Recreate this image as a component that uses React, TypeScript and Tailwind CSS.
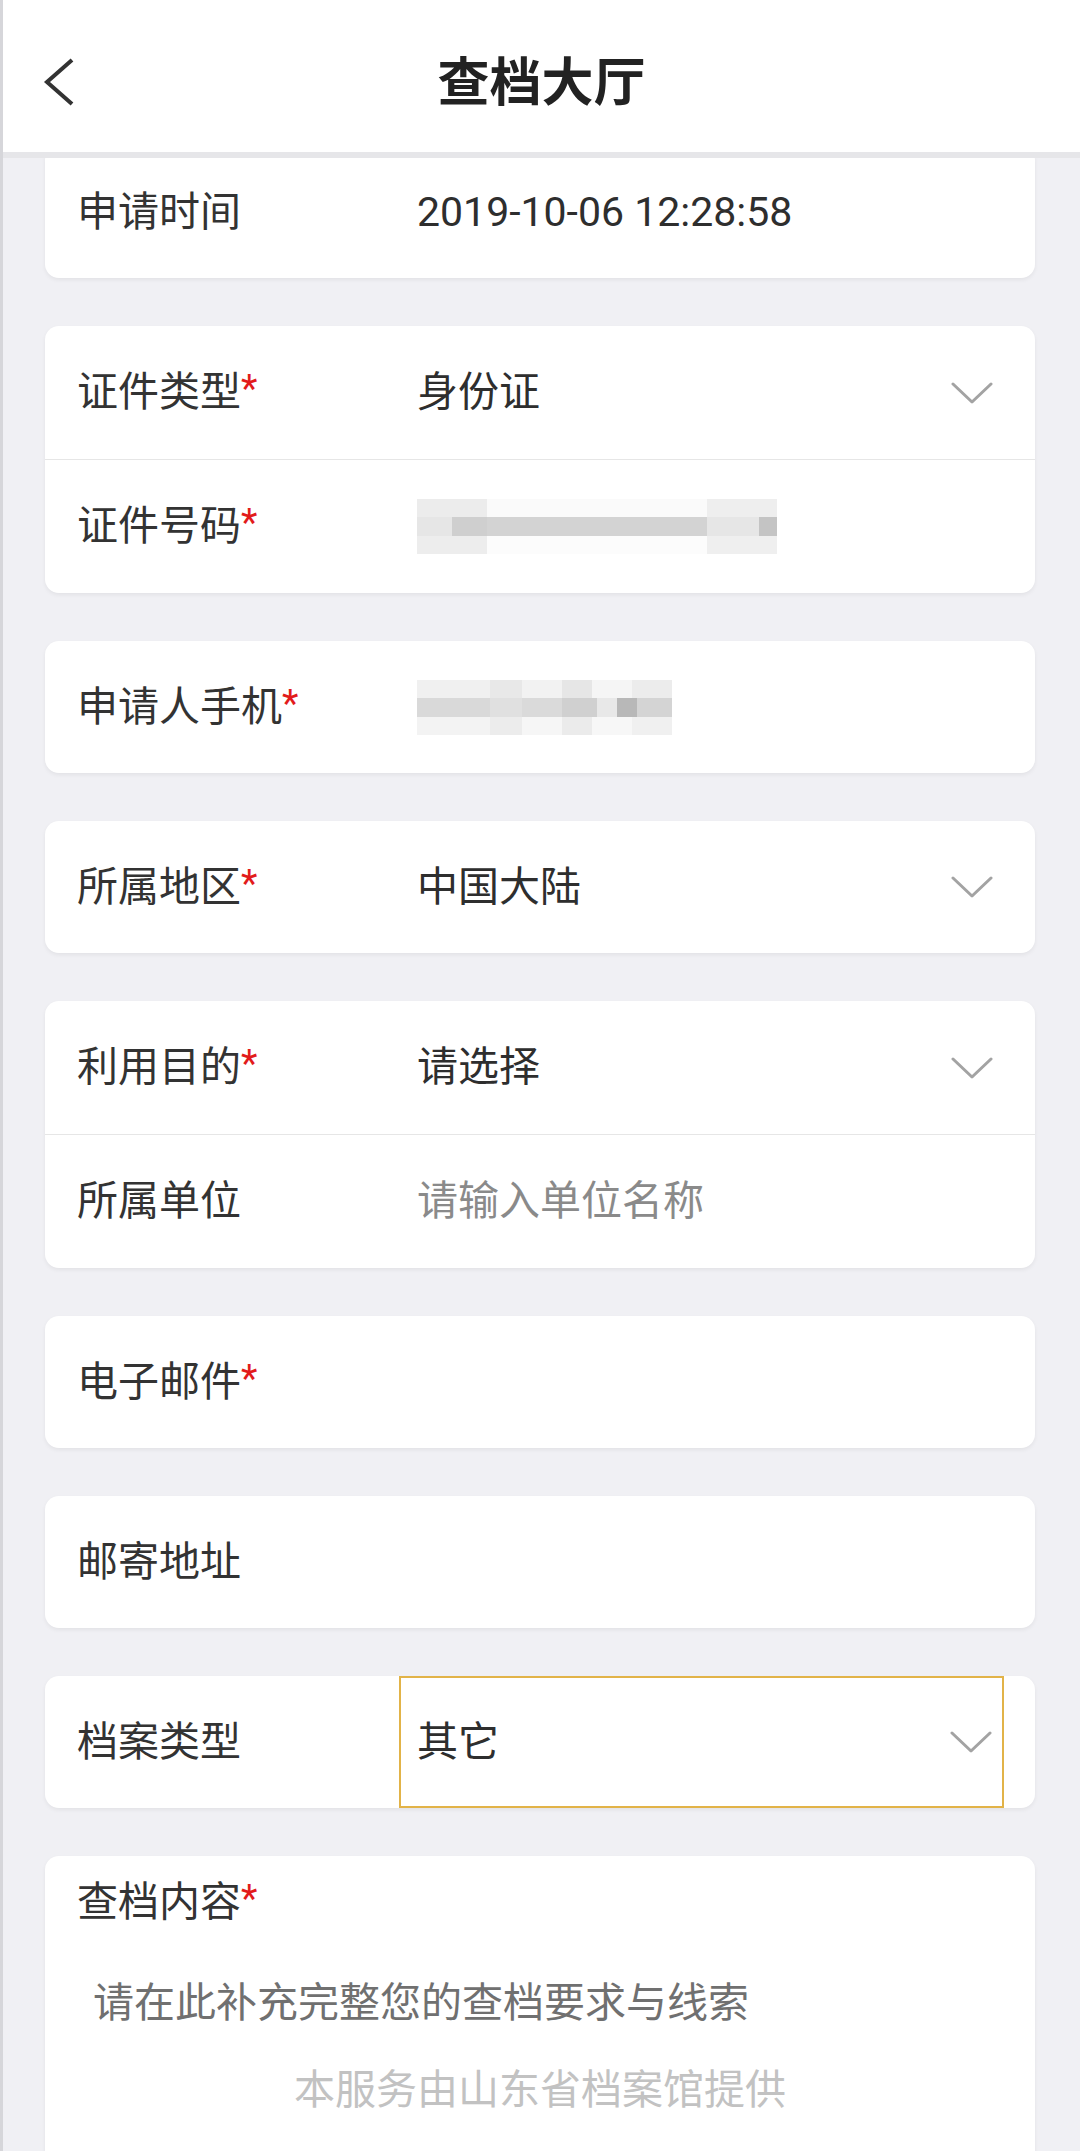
import React from 'react';

type Seg = { w: string; c: string };

// pixelated mosaic that hides the ID number / phone in the screenshot
const ID_BLUR: Seg[][] = [
  [{ w: 'w-[70px]', c: 'bg-[#ececec]' }, { w: 'w-[220px]', c: 'bg-[#fafafa]' }, { w: 'w-[70px]', c: 'bg-[#eeeeee]' }],
  [{ w: 'w-[35px]', c: 'bg-[#e6e6e6]' }, { w: 'w-[35px]', c: 'bg-[#cfcfcf]' }, { w: 'w-[220px]', c: 'bg-[#d3d3d3]' }, { w: 'w-[52px]', c: 'bg-[#e6e6e6]' }, { w: 'w-[18px]', c: 'bg-[#c4c4c4]' }],
  [{ w: 'w-[70px]', c: 'bg-[#ededed]' }, { w: 'w-[220px]', c: 'bg-[#fcfcfc]' }, { w: 'w-[70px]', c: 'bg-[#efefef]' }],
];

const PHONE_BLUR: Seg[][] = [
  [{ w: 'w-[73px]', c: 'bg-[#f0f0f0]' }, { w: 'w-[32px]', c: 'bg-[#e8e8e8]' }, { w: 'w-[40px]', c: 'bg-[#f2f2f2]' }, { w: 'w-[30px]', c: 'bg-[#e6e6e6]' }, { w: 'w-[40px]', c: 'bg-[#f5f5f5]' }, { w: 'w-[40px]', c: 'bg-[#ececec]' }],
  [{ w: 'w-[73px]', c: 'bg-[#d9d9d9]' }, { w: 'w-[32px]', c: 'bg-[#e0e0e0]' }, { w: 'w-[40px]', c: 'bg-[#dadada]' }, { w: 'w-[35px]', c: 'bg-[#d0d0d0]' }, { w: 'w-[20px]', c: 'bg-[#e8e8e8]' }, { w: 'w-[20px]', c: 'bg-[#b8b8b8]' }, { w: 'w-[35px]', c: 'bg-[#d4d4d4]' }],
  [{ w: 'w-[73px]', c: 'bg-[#f3f3f3]' }, { w: 'w-[32px]', c: 'bg-[#ececec]' }, { w: 'w-[40px]', c: 'bg-[#f6f6f6]' }, { w: 'w-[30px]', c: 'bg-[#ebebeb]' }, { w: 'w-[40px]', c: 'bg-[#f7f7f7]' }, { w: 'w-[40px]', c: 'bg-[#f0f0f0]' }],
];

const Mosaic = ({ rows }: { rows: Seg[][] }) => (
  <div className="flex flex-col">
    {rows.map((row, i) => (
      <div key={i} className={`flex ${i === 1 ? 'h-[19px]' : 'h-[18px]'}`}>
        {row.map((s, j) => (
          <div key={j} className={`${s.w} ${s.c} h-full`} />
        ))}
      </div>
    ))}
  </div>
);

const Chevron = () => (
  <svg width="42" height="24" viewBox="0 0 42 24" className="shrink-0">
    <path d="M2 3 L21 21 L40 3" fill="none" stroke="#a3a3a3" strokeWidth="3" strokeLinejoin="round" strokeLinecap="round" />
  </svg>
);

const Label = ({ text, required }: { text: string; required?: boolean }) => (
  <span className="text-[#333] text-[41px] leading-none">
    {text}
    {required && <span className="text-[#e21b1b] text-[38px] relative -top-[4px]">*</span>}
  </span>
);

interface RowProps {
  label: string;
  required?: boolean;
  value?: string;
  placeholder?: string;
  select?: boolean;
  children?: React.ReactNode;
  tall?: boolean;
}

const Row = ({ label, required, value, placeholder, select, children, tall }: RowProps) => (
  <div className={`flex items-center ${tall ? 'h-[133px]' : 'h-[132px]'} pl-[32px] pr-[42px]`}>
    <div className="w-[340px] shrink-0">
      <Label text={label} required={required} />
    </div>
    <div className="flex-1 min-w-0 text-[41px] leading-none">
      {value && <span className="text-[#2e2e2e]">{value}</span>}
      {placeholder && <span className="text-[#8a8a8a]">{placeholder}</span>}
      {children}
    </div>
    {select && <Chevron />}
  </div>
);

const Card = ({ children }: { children: React.ReactNode }) => (
  <div className="bg-white rounded-[14px] shadow-[0_2px_4px_rgba(0,0,0,0.06)] overflow-hidden">{children}</div>
);

const Divider = () => <div className="h-px bg-[#e6e6e6]" />;

export default function App() {
  return (
    <div className="w-[1080px] h-[2151px] overflow-hidden bg-[#f0f0f4] border-l-[3px] border-[#d6d6da] font-['Roboto','Noto_Sans_CJK_SC',sans-serif]">
      <div className="relative z-10 h-[158px] bg-white border-b-[6px] border-[#e6e6e9] flex items-center">
        <div className="pl-[38px] w-[200px] pt-[12px]">
          <svg width="36" height="50" viewBox="0 0 36 50">
            <path d="M31 3 L6 25 L31 47" fill="none" stroke="#333" strokeWidth="4" strokeLinejoin="miter" />
          </svg>
        </div>
        <div className="flex-1 text-center text-[52px] font-bold text-[#222] pr-[200px] pt-[16px] leading-none">查档大厅</div>
      </div>

      <div className="-mt-[12px] pl-[42px] pr-[45px] flex flex-col gap-[48px]">
        <Card>
          <Row label="申请时间" value="2019-10-06 12:28:58" />
        </Card>

        <Card>
          <Row label="证件类型" required value="身份证" select tall />
          <Divider />
          <Row label="证件号码" required tall>
            <Mosaic rows={ID_BLUR} />
          </Row>
        </Card>

        <Card>
          <Row label="申请人手机" required>
            <Mosaic rows={PHONE_BLUR} />
          </Row>
        </Card>

        <Card>
          <Row label="所属地区" required value="中国大陆" select />
        </Card>

        <Card>
          <Row label="利用目的" required value="请选择" select tall />
          <Divider />
          <Row label="所属单位" placeholder="请输入单位名称" tall />
        </Card>

        <Card>
          <Row label="电子邮件" required />
        </Card>

        <Card>
          <Row label="邮寄地址" />
        </Card>

        <Card>
          <div className="flex h-[132px]">
            <div className="w-[354px] shrink-0 pl-[32px] flex items-center">
              <Label text="档案类型" />
            </div>
            <div className="w-[605px] h-full border-2 border-[#e2b348] flex items-center pl-[16px] pr-[10px]">
              <span className="flex-1 text-[41px] leading-none text-[#2e2e2e]">其它</span>
              <Chevron />
            </div>
          </div>
        </Card>

        <Card>
          <div className="h-[400px]">
            <div className="h-[92px] pl-[32px] flex items-center">
              <Label text="查档内容" required />
            </div>
            <div className="mt-[35px] h-[40px] pl-[48px] text-[41px] leading-[40px] text-[#707070]">请在此补充完整您的查档要求与线索</div>
            <div className="mt-[47px] h-[40px] text-center text-[41px] leading-[40px] text-[#c2c2c2]">本服务由山东省档案馆提供</div>
          </div>
        </Card>
      </div>
    </div>
  );
}
